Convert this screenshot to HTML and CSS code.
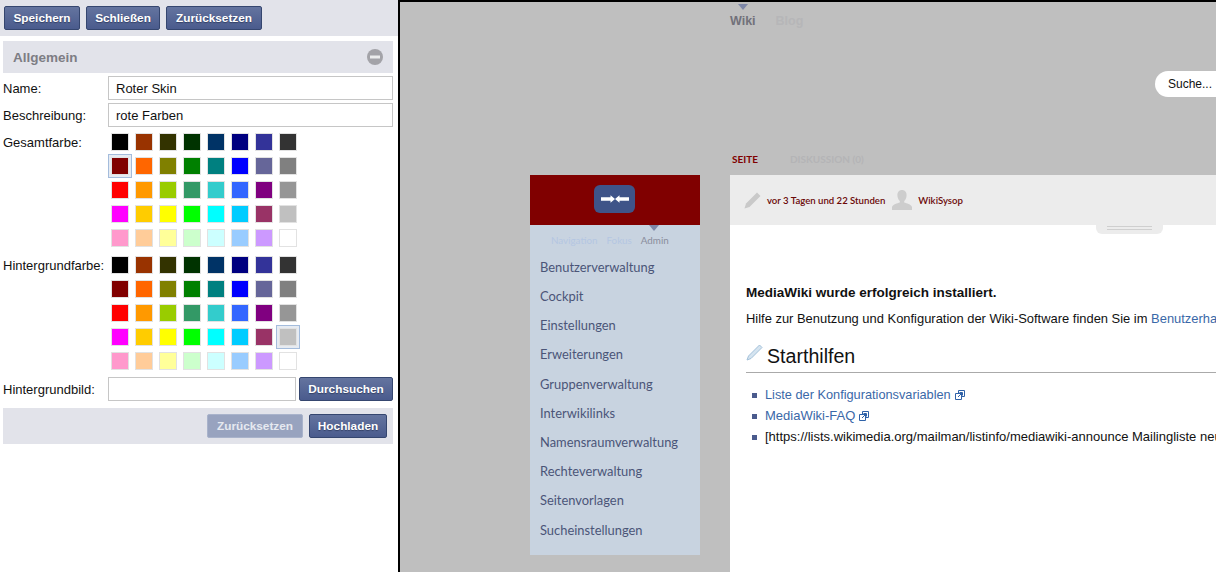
FILE: index.html
```html
<!DOCTYPE html>
<html lang="de">
<head>
<meta charset="utf-8">
<title>Skin</title>
<link rel="stylesheet" href="styles.css">
</head>
<body>
<div class="page">
  <aside class="editor">
    <div class="toolbar">
      <button class="btn btn-save">Speichern</button>
      <button class="btn btn-close">Schließen</button>
      <button class="btn btn-reset">Zurücksetzen</button>
    </div>
    <section class="form">
      <header class="form-head">
        <span>Allgemein</span>
        <svg class="collapse" width="16" height="16" viewBox="0 0 16 16"><circle cx="8" cy="8" r="8" fill="#a3a3a8"/><rect x="3" y="6.5" width="10" height="3" fill="#eceded"/></svg>
      </header>
      <div class="field first"><label>Name:</label><div class="input">Roter Skin</div></div>
      <div class="field"><label>Beschreibung:</label><div class="input">rote Farben</div></div>
      <div class="field palette-field first-palette">
        <label>Gesamtfarbe:</label>
        <div class="palette">
          <span class="sw"><i class="s-000000"></i></span><span class="sw"><i class="s-993300"></i></span><span class="sw"><i class="s-333300"></i></span><span class="sw"><i class="s-003300"></i></span><span class="sw"><i class="s-003366"></i></span><span class="sw"><i class="s-000080"></i></span><span class="sw"><i class="s-333399"></i></span><span class="sw"><i class="s-333333"></i></span>
          <span class="sw selected"><i class="s-800000"></i></span><span class="sw"><i class="s-ff6600"></i></span><span class="sw"><i class="s-808000"></i></span><span class="sw"><i class="s-008000"></i></span><span class="sw"><i class="s-008080"></i></span><span class="sw"><i class="s-0000ff"></i></span><span class="sw"><i class="s-666699"></i></span><span class="sw"><i class="s-808080"></i></span>
          <span class="sw"><i class="s-ff0000"></i></span><span class="sw"><i class="s-ff9900"></i></span><span class="sw"><i class="s-99cc00"></i></span><span class="sw"><i class="s-339966"></i></span><span class="sw"><i class="s-33cccc"></i></span><span class="sw"><i class="s-3366ff"></i></span><span class="sw"><i class="s-800080"></i></span><span class="sw"><i class="s-969696"></i></span>
          <span class="sw"><i class="s-ff00ff"></i></span><span class="sw"><i class="s-ffcc00"></i></span><span class="sw"><i class="s-ffff00"></i></span><span class="sw"><i class="s-00ff00"></i></span><span class="sw"><i class="s-00ffff"></i></span><span class="sw"><i class="s-00ccff"></i></span><span class="sw"><i class="s-993366"></i></span><span class="sw"><i class="s-c0c0c0"></i></span>
          <span class="sw"><i class="s-ff99cc"></i></span><span class="sw"><i class="s-ffcc99"></i></span><span class="sw"><i class="s-ffff99"></i></span><span class="sw"><i class="s-ccffcc"></i></span><span class="sw"><i class="s-ccffff"></i></span><span class="sw"><i class="s-99ccff"></i></span><span class="sw"><i class="s-cc99ff"></i></span><span class="sw"><i class="s-ffffff"></i></span>
        </div>
      </div>
      <div class="field palette-field">
        <label>Hintergrundfarbe:</label>
        <div class="palette">
          <span class="sw"><i class="s-000000"></i></span><span class="sw"><i class="s-993300"></i></span><span class="sw"><i class="s-333300"></i></span><span class="sw"><i class="s-003300"></i></span><span class="sw"><i class="s-003366"></i></span><span class="sw"><i class="s-000080"></i></span><span class="sw"><i class="s-333399"></i></span><span class="sw"><i class="s-333333"></i></span>
          <span class="sw"><i class="s-800000"></i></span><span class="sw"><i class="s-ff6600"></i></span><span class="sw"><i class="s-808000"></i></span><span class="sw"><i class="s-008000"></i></span><span class="sw"><i class="s-008080"></i></span><span class="sw"><i class="s-0000ff"></i></span><span class="sw"><i class="s-666699"></i></span><span class="sw"><i class="s-808080"></i></span>
          <span class="sw"><i class="s-ff0000"></i></span><span class="sw"><i class="s-ff9900"></i></span><span class="sw"><i class="s-99cc00"></i></span><span class="sw"><i class="s-339966"></i></span><span class="sw"><i class="s-33cccc"></i></span><span class="sw"><i class="s-3366ff"></i></span><span class="sw"><i class="s-800080"></i></span><span class="sw"><i class="s-969696"></i></span>
          <span class="sw"><i class="s-ff00ff"></i></span><span class="sw"><i class="s-ffcc00"></i></span><span class="sw"><i class="s-ffff00"></i></span><span class="sw"><i class="s-00ff00"></i></span><span class="sw"><i class="s-00ffff"></i></span><span class="sw"><i class="s-00ccff"></i></span><span class="sw"><i class="s-993366"></i></span><span class="sw selected"><i class="s-c0c0c0"></i></span>
          <span class="sw"><i class="s-ff99cc"></i></span><span class="sw"><i class="s-ffcc99"></i></span><span class="sw"><i class="s-ffff99"></i></span><span class="sw"><i class="s-ccffcc"></i></span><span class="sw"><i class="s-ccffff"></i></span><span class="sw"><i class="s-99ccff"></i></span><span class="sw"><i class="s-cc99ff"></i></span><span class="sw"><i class="s-ffffff"></i></span>
        </div>
      </div>
      <div class="field file-field">
        <label>Hintergrundbild:</label>
        <div class="input file-input"></div>
        <button class="btn btn-browse">Durchsuchen</button>
      </div>
      <div class="form-foot">
        <button class="btn btn-disabled">Zurücksetzen</button>
        <button class="btn btn-upload">Hochladen</button>
      </div>
    </section>
  </aside>

  <main class="preview">
    <nav class="topnav">
      <span class="topnav-item active">Wiki</span>
      <span class="topnav-item">Blog</span>
    </nav>
    <div class="search-row"><div class="search">Suche...</div></div>
    <div class="columns">
      <div class="sidebar">
        <div class="side-head">
          <div class="toggle">
            <svg width="36" height="12" viewBox="0 0 36 12"><path d="M4 4.300h9.500V2.300L18 6l-4.500 3.700V7.700H4z" fill="#fff"/><path d="M32 4.300h-9.500V2.300L18 6l4.500 3.700V7.700H32z" fill="#fff"/></svg>
          </div>
        </div>
        <div class="side-body">
          <div class="side-tabs">
            <span>Navigation</span><span>Fokus</span><span class="on">Admin</span>
          </div>
          <ul class="side-menu">
            <li>Benutzerverwaltung</li>
            <li>Cockpit</li>
            <li>Einstellungen</li>
            <li>Erweiterungen</li>
            <li>Gruppenverwaltung</li>
            <li>Interwikilinks</li>
            <li>Namensraumverwaltung</li>
            <li>Rechteverwaltung</li>
            <li>Seitenvorlagen</li>
            <li>Sucheinstellungen</li>
          </ul>
        </div>
      </div>
      <div class="content">
        <div class="tabs"><span class="tab on">SEITE</span><span class="tab">DISKUSSION (0)</span></div>
        <div class="meta">
          <svg class="meta-pencil" width="17" height="17" viewBox="0 0 17 17"><path d="M13 .5l3.500 3.500L5.500 15 .5 16.500 2 11.500z" fill="#c9c9c9"/></svg>
          <span class="meta-text">vor 3 Tagen und 22 Stunden</span>
          <svg class="meta-user" width="20" height="20" viewBox="0 0 20 20"><path d="M10 0c3 0 4.600 2.200 4.600 5.200 0 2.400-1 4.600-2.400 5.800v1.600c2.500.8 6.800 1.800 7.800 4.400v3H0v-3c1-2.600 5.300-3.600 7.800-4.400V11C6.400 9.800 5.400 7.600 5.400 5.200 5.400 2.200 7 0 10 0z" fill="#cdcdcd"/></svg>
          <span class="meta-text">WikiSysop</span>
        </div>
        <div class="pull"><i></i><i></i></div>
        <article class="article">
          <p class="lead">MediaWiki wurde erfolgreich installiert.</p>
          <p class="intro">Hilfe zur Benutzung und Konfiguration der Wiki-Software finden Sie im <a>Benutzerhandbuch</a>.</p>
          <h2><svg width="17" height="17" viewBox="0 0 17 17"><path d="M13.500 1l2.500 2.500L5 14.500 1 16l1.500-4z" fill="#d5e4f0" stroke="#a3c1da" stroke-width="1"/></svg><span>Starthilfen</span></h2>
          <ul class="links">
            <li><a class="tight">Liste der Konfigurationsvariablen</a><svg class="ext" width="10" height="10" viewBox="0 0 10 10"><path d="M3.500.5h6v6h-6z" fill="#fff" stroke="#2f62a8"/><path d="M.5 3.500h6v6h-6z" fill="#fff" stroke="#2f62a8"/><path d="M3 7l4-4M4.500 2.500H7.500v3" fill="none" stroke="#2f62a8"/></svg></li>
            <li><a>MediaWiki-FAQ</a><svg class="ext" width="10" height="10" viewBox="0 0 10 10"><path d="M3.500.5h6v6h-6z" fill="#fff" stroke="#2f62a8"/><path d="M.5 3.500h6v6h-6z" fill="#fff" stroke="#2f62a8"/><path d="M3 7l4-4M4.500 2.500H7.500v3" fill="none" stroke="#2f62a8"/></svg></li>
            <li>[https://lists.wikimedia.org/mailman/listinfo/mediawiki-announce Mailingliste neuer Versionen]</li>
          </ul>
        </article>
      </div>
    </div>
  </main>
</div>
</body>
</html>
```
FILE: styles.css
```css
* { box-sizing: border-box; }
html, body { margin: 0; height: 572px; overflow: hidden; background: #fff; }
body { font-family: "Liberation Sans", Arial, sans-serif; font-size: 12px; color: #111; }
.page { display: flex; height: 572px; }

/* Editor panel */
.editor { width: 398px; flex: none; background: #fff; }
.toolbar { height: 36px; background: #e2e3ea; padding: 6px 4px; display: flex; gap: 6px; }
.btn {
  height: 24px; padding: 0; border: 1px solid #35466f; border-radius: 2px;
  background: linear-gradient(#64749f, #4a5b8d);
  color: #fff; font: bold 11.8px "Liberation Sans", Arial, sans-serif;
  text-shadow: 0 1px 1px rgba(30, 40, 70, .6);
  display: block; flex: none; text-align: center;
}
.btn-save { width: 76px; }
.btn-close { width: 74px; }
.btn-reset { width: 96px; }
.btn-browse { width: 94px; margin-left: 3px; }
.btn-upload { width: 78px; }
.btn-disabled { width: 96px; background: #98a3bf; border-color: #a9b3cb; color: #e6e9f0; text-shadow: none; }

.form { margin: 5px 5px 0 3px; }
.form-head {
  height: 32px; background: #e2e3ea; padding: 0 10px;
  display: flex; align-items: center; justify-content: space-between;
  font-size: 13.5px; font-weight: bold; color: #7d7d84;
}
.field { display: flex; margin-top: 3px; }
.field label { width: 105px; height: 24px; flex: none; font-size: 13px; line-height: 25px; color: #111; }
.input {
  flex: 1; height: 24px; border: 1px solid #c6c6c6; background: #fff;
  padding-left: 7px; font-size: 13px; line-height: 23px; color: #111;
}
.palette-field { margin-top: 0; }
.first-palette { margin-top: 3px; }
.palette-field + .palette-field { margin-top: 3px; }
.palette { display: grid; grid-template-columns: repeat(8, 24px); grid-auto-rows: 24px; }
.sw { display: flex; align-items: center; justify-content: center; border: 1px solid transparent; }
.sw i { display: block; width: 18px; height: 18px; border: 1px solid #e2e2e2; }
.sw.selected { background: #e6ebf2; border-color: #a4bcdc; }
.file-field { margin-top: 4px; }
.file-input { flex: none; width: 188px; }
.form-foot {
  height: 36px; margin-top: 7px; background: #e2e3ea;
  padding: 6px 6px; display: flex; justify-content: flex-end; gap: 6px;
}

.s-000000 { background: #000000; } .s-993300 { background: #993300; } .s-333300 { background: #333300; } .s-003300 { background: #003300; }
.s-003366 { background: #003366; } .s-000080 { background: #000080; } .s-333399 { background: #333399; } .s-333333 { background: #333333; }
.s-800000 { background: #800000; } .s-ff6600 { background: #ff6600; } .s-808000 { background: #808000; } .s-008000 { background: #008000; }
.s-008080 { background: #008080; } .s-0000ff { background: #0000ff; } .s-666699 { background: #666699; } .s-808080 { background: #808080; }
.s-ff0000 { background: #ff0000; } .s-ff9900 { background: #ff9900; } .s-99cc00 { background: #99cc00; } .s-339966 { background: #339966; }
.s-33cccc { background: #33cccc; } .s-3366ff { background: #3366ff; } .s-800080 { background: #800080; } .s-969696 { background: #969696; }
.s-ff00ff { background: #ff00ff; } .s-ffcc00 { background: #ffcc00; } .s-ffff00 { background: #ffff00; } .s-00ff00 { background: #00ff00; }
.s-00ffff { background: #00ffff; } .s-00ccff { background: #00ccff; } .s-993366 { background: #993366; } .s-c0c0c0 { background: #c0c0c0; }
.s-ff99cc { background: #ff99cc; } .s-ffcc99 { background: #ffcc99; } .s-ffff99 { background: #ffff99; } .s-ccffcc { background: #ccffcc; }
.s-ccffff { background: #ccffff; } .s-99ccff { background: #99ccff; } .s-cc99ff { background: #cc99ff; } .s-ffffff { background: #ffffff; }

/* Preview */
.preview {
  flex: 1; min-width: 0; height: 572px; overflow: hidden;
  background: #bfbfbf; border-left: 2px solid #000; border-top: 2px solid #000;
}
.topnav { height: 24px; margin-left: 330px; display: flex; gap: 20px; padding-top: 12px; font-size: 12.5px; font-weight: bold; color: #b6b6b8; line-height: 15px; }
.topnav-item { position: relative; }
.topnav-item.active { color: #71717a; }
.topnav-item.active::before {
  content: ""; position: absolute; left: 8px; top: -10px;
  border: 5px solid transparent; border-top: 6px solid #7d87a8; border-bottom: 0;
}
.search-row { height: 149px; padding-top: 45px; display: flex; justify-content: flex-end; }
.search {
  width: 61px; height: 26px; background: #fff; border-radius: 13px 0 0 13px;
  padding-left: 13px; font-size: 12px; line-height: 26px; color: #111;
}
.columns { display: flex; align-items: flex-start; padding-left: 130px; }
.sidebar { width: 170px; flex: none; }
.side-head { height: 50px; background: #800000; padding: 10px 0 0 64px; }
.toggle { width: 41px; height: 28px; border-radius: 6px; background: #3f5488; display: flex; align-items: center; justify-content: center; }
.side-body { position: relative; height: 330px; background: #c8d3e0; }
.side-body::before {
  content: ""; position: absolute; left: 119px; top: 0;
  border: 5px solid transparent; border-top: 6px solid #7d87a8; border-bottom: 0;
}
.side-tabs { display: flex; gap: 9px; padding: 9px 0 0 21px; height: 27.7px; font: 9.8px/12px Lato, sans-serif; color: #b4c6e2; }
.side-tabs .on { color: #8a8d9c; }
.side-menu { list-style: none; margin: 0; padding: 0 0 0 10px; font: 12.9px/29.2px Lato, sans-serif; color: #4b5578; }

.content { width: 486px; flex: none; margin-left: 30px; margin-top: -25px; }
.tabs { height: 25px; padding-left: 2px; display: flex; gap: 32px; font: bold 10px/19px Lato, sans-serif; color: #b4b4b6; }
.tab.on { color: #800000; }
.meta { height: 50px; background: #ececec; display: flex; align-items: center; padding-left: 14px; font: 600 9.6px Lato, sans-serif; color: #6b0808; }
.meta-pencil { margin-right: 6px; }
.meta-user { margin: 0 6px 0 7px; }
.pull { position: relative; width: 67px; height: 9px; margin-left: 366px; background: #ececec; border-radius: 0 0 6px 6px; padding: 1px 11px 0; }
.pull i { display: block; height: 1px; background: #cfcfcf; margin-bottom: 2px; }
.article { background: #fff; height: 347px; margin-top: -9px; padding: 60px 0 0 16px; font-size: 13px; line-height: 16px; white-space: nowrap; overflow: hidden; }
.lead { margin: 0; font-size: 13.5px; font-weight: bold; }
.intro { margin: 10px 0 0; font-size: 12.93px; }
.article a { color: #3a68a8; }
h2 { margin: 13px 0 0; height: 33px; border-bottom: 1px solid #aaa; padding-top: 3px; font-size: 19.6px; font-weight: normal; line-height: 26px; display: flex; align-items: flex-start; color: #111; }
h2 svg { margin: 1px 4px 0 0; flex: none; }
.links { list-style: none; margin: 14px 0 0; padding: 0 0 0 19px; }
.links li { position: relative; height: 21px; }
.links li::before { content: ""; position: absolute; left: -13px; top: 6px; width: 5px; height: 5px; background: #4a5b8d; }
.tight { font-size: 12.75px; }
.ext { margin-left: 4px; vertical-align: -1px; }
```
